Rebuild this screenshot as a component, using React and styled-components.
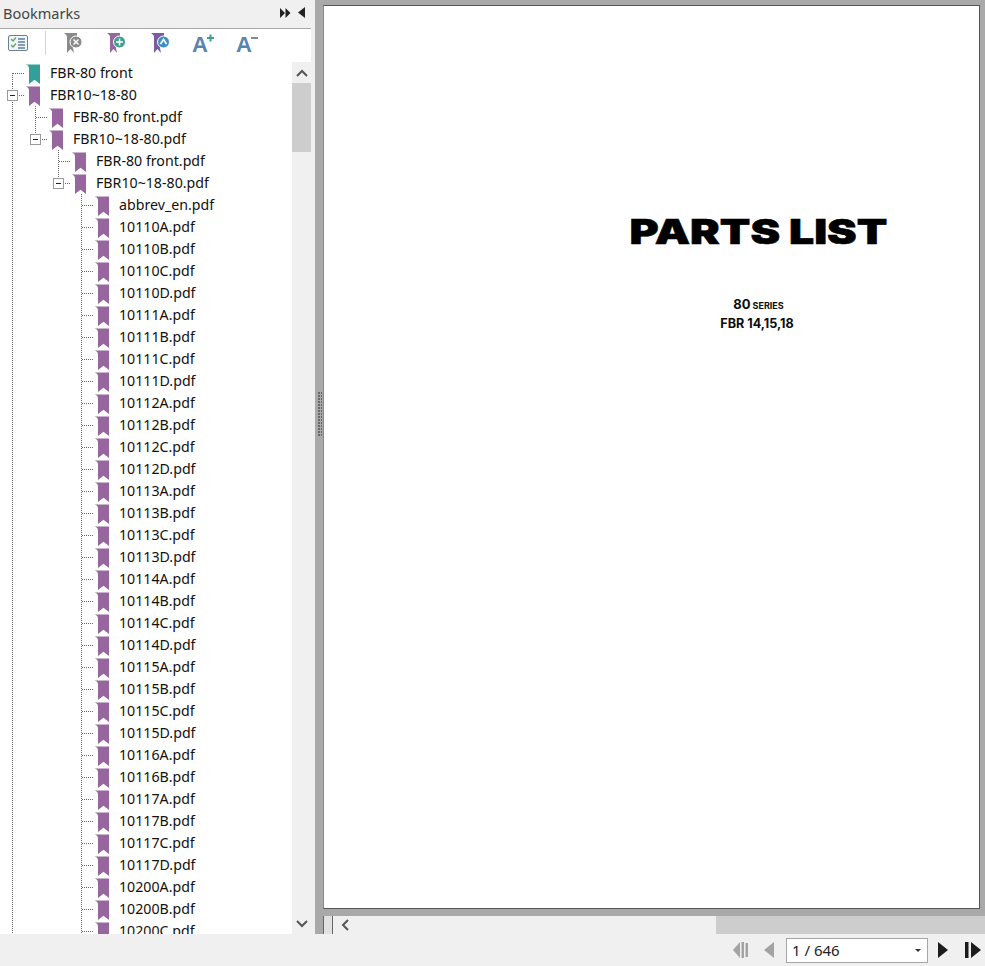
import React from "react";
import styled, { createGlobalStyle } from "styled-components";

const Global = createGlobalStyle`
  html, body { margin: 0; padding: 0; background: #f0f0f0; }
  #root { width: 985px; height: 966px; overflow: hidden; }
`;
const FONT = `"Noto Sans", "Liberation Sans", sans-serif`;

const Shell = styled.div`
  width: 985px; height: 966px; display: grid;
  grid-template-columns: 315px 670px; grid-template-rows: 934px 32px;
  font-family: ${FONT}; background: #f0f0f0;
`;
const Panel = styled.aside`display: flex; flex-direction: column; min-height: 0; padding-right: 4px;`;
const PanelHeader = styled.header`
  height: 29px; box-sizing: border-box; flex: none; display: flex; align-items: center; justify-content: space-between;
  border-bottom: 1px solid #a9a9a9; padding: 0 6px 3px 3px; color: #444; font-size: 14.5px;
`;
const HeaderTitle = styled.span`letter-spacing: 0;`;
const HeaderIcons = styled.div`display: flex; align-items: center; gap: 7px;`;
const Toolbar = styled.div`
  height: 33px; box-sizing: border-box; flex: none; background: #fff; display: flex; align-items: center; padding-bottom: 5px;
`;
const ToolIcon = styled.svg`flex: none; margin-left: ${p => p.$ml}px; display: block;`;
const Divider = styled.span`flex: none; width: 1px; height: 24px; background: #d4d4d4; margin-left: 17px;`;
const TreeArea = styled.div`flex: 1; min-height: 0; display: flex; background: #fff;`;
const Tree = styled.ul`flex: 1; margin: 0; padding: 0; list-style: none; overflow: hidden;`;
const Row = styled.li`display: flex; align-items: center; height: 22px;`;
const dotsV = `repeating-linear-gradient(to bottom, #666 0 1px, transparent 1px 2px)`;
const dotsH = `repeating-linear-gradient(to right, #666 0 1px, transparent 1px 2px)`;
const Cell = styled.span`
  flex: none; width: 23px; height: 22px; position: relative;
  &::before {
    content: ""; position: absolute; left: 12px; width: 1px;
    display: ${p => (p.$kind === "blank" ? "none" : "block")};
    top: ${p => (p.$kind === "first" ? "11px" : "0")};
    bottom: ${p => (p.$kind === "elbow" ? "11px" : "0")};
    background: ${dotsV};
  }
  &::after {
    content: ""; position: absolute; left: 13px; width: 12px; top: 11px; height: 1px;
    display: ${p => (p.$kind === "blank" || p.$kind === "through" ? "none" : "block")};
    background: ${dotsH};
  }
`;
const Expander = styled.span`
  position: absolute; z-index: 1; left: 7px; top: 6px; width: 9px; height: 9px; background: #fff;
  border: 1px solid #9a9a9a;
  &::after { content: ""; position: absolute; left: 2px; right: 2px; top: 4px; height: 1px; background: #222; }
`;
const Mark = styled.svg`flex: none; display: block; margin: 2px 10px 0 2px; color: ${p => p.$c};`;
const Label = styled.span`font-size: 14.2px; color: #111; white-space: pre; line-height: 22px;`;
const VScroll = styled.div`
  flex: none; width: 19px; background: #f0f0f0; display: flex; flex-direction: column; align-items: stretch;
`;
const ScrollBtn = styled.div`height: 21px; flex: none; display: flex; align-items: center; justify-content: center;`;
const VThumb = styled.div`height: 69px; flex: none; background: #cdcdcd;`;
const VTrack = styled.div`flex: 1;`;
const Viewer = styled.main`display: flex; flex-direction: column; min-height: 0; background: #a9a9a9;`;
const Canvas = styled.div`flex: 1; min-height: 0; padding: 5px 5px 6px 8px; position: relative;`;
const Grip = styled.span`
  position: absolute; left: 3px; top: 392px; width: 4px; height: 44px;
  background-image: radial-gradient(circle at 1px 1px, #666 0.7px, transparent 1px);
  background-size: 3px 3px;
`;
const Page = styled.section`
  height: 100%; width: 100%; box-sizing: border-box; background: #fff; border: 1px solid #555; border-left-color: #888;
  padding: 0 0 0 214px; display: flex; flex-direction: column; align-items: center;
  color: #0b0b0b; font-family: Inter, "Liberation Sans", sans-serif;
`;
const PartsTitle = styled.h1`
  margin: 208px 0 0; font-size: 34px; line-height: 36px; font-weight: 900; white-space: pre;
  -webkit-text-stroke: 0.6px #000; color: #000; transform: scaleX(1.31);
`;
const Series = styled.div`margin-top: 47px; font-weight: 700; font-size: 13px; line-height: 14px; display: flex; align-items: baseline; gap: 2px;`;
const SeriesSmall = styled.span`font-size: 9px;`;
const Model = styled.div`margin-top: 4px; font-weight: 700; font-size: 12.6px; line-height: 14px; margin-left: -3px;`;
const HScroll = styled.div`height: 18px; flex: none; margin-top: 1px; margin-left: 8px; background: #f0f0f0; display: flex; align-items: center;`;
const HBox = styled.div`width: 8px; height: 18px; flex: none; box-sizing: content-box; background: #e1e1e1; border: solid #666; border-width: 0 1px;`;
const HArrow = styled.div`width: 23px; flex: none; display: flex; justify-content: center;`;
const HGap = styled.div`flex: 1;`;
const HThumb = styled.div`width: 269px; height: 18px; background: #cdcdcd; flex: none;`;
const Footer = styled.footer`
  grid-column: 1 / 3; display: flex; align-items: center; background: #f0f0f0; padding-left: 733px;
`;
const NavIcon = styled.svg`flex: none; display: block; margin-left: ${p => p.$ml || 0}px;`;
const PageSelect = styled.div`
  flex: none; margin-left: 12px; width: 142px; height: 25px; box-sizing: border-box; border: 1px solid #a6a6a6; background: #fff;
  display: flex; align-items: center; justify-content: space-between; padding: 0 6px 0 5px; font-size: 15px; color: #222;
`;
const Caret = styled.span`width: 0; height: 0; border: 3px solid transparent; border-top: 3px solid #333; border-bottom: 0;`;

const Bookmark = ({ c }) => (
  <Mark $c={c} width="15" height="20" viewBox="0 0 15 20">
    <path fill="currentColor" d="M0.5 0.6 H15 V20 L9.5 15.8 L4 20 V4.5 C4 2.2 2.5 1.2 0.5 0.6Z" />
  </Mark>
);

const Tool = ({ ml, children, w = 22 }) => (
  <ToolIcon $ml={ml} width={w} height="22" viewBox={`0 0 ${w} 22`}>{children}</ToolIcon>
);
const LetterTool = ({ ml, children }) => (
  <ToolIcon $ml={ml} width="24" height="28" viewBox="0 0 24 28">
    <text x="0" y="23" fontFamily="Liberation Sans" fontWeight="700" fontSize="22" fill="#5a84b0">A</text>
    {children}
  </ToolIcon>
);
const Ribbon = ({ c }) => (
  <path fill={c} d="M0 1.5 L1.5 1 H13 V9 H9 V16 L10 21 L6.5 17 L3 21 V5 C3 3.4 1.5 2 0 1.5Z" />
);
const Chev = ({ d }) => (
  <svg width="12" height="8" viewBox="0 0 12 8">
    <path d={d} fill="none" stroke="#555" strokeWidth="2" />
  </svg>
);

const names = ["abbrev_en.pdf"];
for (const [n, s] of [[110, "ABCD"], [111, "ABCD"], [112, "ABCD"], [113, "ABCD"], [114, "ABCD"], [115, "ABCD"], [116, "AB"], [117, "ABCD"], [200, "ABC"]])
  for (const l of s) names.push(`10${n}${l}.pdf`);

const TEAL = "#339f99", PURPLE = "#98669f";
const rows = [
  { cells: [["first"]], label: "FBR-80 front", c: TEAL },
  { cells: [["tee", 1]], label: "FBR10~18-80" },
  { cells: [["through"], ["tee"]], label: "FBR-80 front.pdf" },
  { cells: [["through"], ["elbow", 1]], label: "FBR10~18-80.pdf" },
  { cells: [["through"], ["blank"], ["tee"]], label: "FBR-80 front.pdf" },
  { cells: [["through"], ["blank"], ["elbow", 1]], label: "FBR10~18-80.pdf" },
  ...names.map(label => ({ cells: [["through"], ["blank"], ["blank"], ["tee"]], label })),
];

export default function App() {
  return (
    <Shell>
      <Global />
      <Panel>
        <PanelHeader>
          <HeaderTitle>Bookmarks</HeaderTitle>
          <HeaderIcons>
            <svg width="11" height="10" viewBox="0 0 11 10"><path fill="#222" d="M0 0 L5 5 L0 10Z M5.5 0 L10.5 5 L5.5 10Z" /></svg>
            <svg width="7" height="11" viewBox="0 0 7 11"><path fill="#222" d="M7 0 V11 L0 5.5Z" /></svg>
          </HeaderIcons>
        </PanelHeader>
        <Toolbar>
          <ToolIcon $ml={8} width="20" height="18" viewBox="0 0 20 18">
            <rect x=".5" y="1.5" width="19" height="15" rx="1.5" fill="#f2f5f8" stroke="#6d7f92" />
            <path d="M3 5 L5 7 L8 3.5 M3 11 L5 13 L8 9.5" fill="none" stroke="#6aa35a" strokeWidth="1.3" />
            <path d="M10 5 H17 M10 8 H17 M10 11 H17 M10 14 H17" stroke="#5c7f9f" strokeWidth="1.3" />
          </ToolIcon>
          <Divider />
          <Tool ml={18}>
            <Ribbon c="#8a8a8a" />
            <circle cx="12" cy="10" r="6" fill="#8a8a8a" stroke="#fff" strokeWidth="1" />
            <path d="M9.5 7.5 L14.5 12.5 M14.5 7.5 L9.5 12.5" stroke="#fff" strokeWidth="1.5" />
          </Tool>
          <Tool ml={21}>
            <Ribbon c={PURPLE} />
            <circle cx="12.5" cy="10" r="6" fill="#3f9f8d" stroke="#fff" strokeWidth="1" />
            <path d="M12.5 6.5 V13.5 M9 10 H16" stroke="#fff" strokeWidth="1.6" />
          </Tool>
          <Tool ml={22}>
            <Ribbon c="#7a5aa0" />
            <circle cx="12.5" cy="10" r="6" fill="#3f8fc0" stroke="#fff" strokeWidth="1" />
            <path d="M9.5 12 L12.5 7.5 L15.5 12" stroke="#fff" strokeWidth="1.6" fill="none" />
          </Tool>
          <LetterTool ml={19}>
            <path d="M15 9 H22 M18.5 5.5 V12.5" stroke="#3f9f8d" strokeWidth="2" />
          </LetterTool>
          <LetterTool ml={20}>
            <path d="M15 9 H22" stroke="#7f8f8f" strokeWidth="2" />
          </LetterTool>
        </Toolbar>
        <TreeArea>
          <Tree>
            {rows.map((r, i) => (
              <Row key={i}>
                {r.cells.map(([k, box], j) => (
                  <Cell key={j} $kind={k}>{box && <Expander />}</Cell>
                ))}
                <Bookmark c={r.c || PURPLE} />
                <Label>{r.label}</Label>
              </Row>
            ))}
          </Tree>
          <VScroll>
            <ScrollBtn><Chev d="M1 7 L6 2 L11 7" /></ScrollBtn>
            <VThumb />
            <VTrack />
            <ScrollBtn><Chev d="M1 1 L6 6 L11 1" /></ScrollBtn>
          </VScroll>
        </TreeArea>
      </Panel>
      <Viewer>
        <Canvas>
          <Grip />
          <Page>
            <PartsTitle>PARTS LIST</PartsTitle>
            <Series>80<SeriesSmall>SERIES</SeriesSmall></Series>
            <Model>FBR 14,15,18</Model>
          </Page>
        </Canvas>
        <HScroll>
          <HBox />
          <HArrow><svg width="8" height="12" viewBox="0 0 8 12"><path d="M7 1 L2 6 L7 11" fill="none" stroke="#555" strokeWidth="2" /></svg></HArrow>
          <HGap />
          <HThumb />
        </HScroll>
      </Viewer>
      <Footer>
        <NavIcon width="16" height="16" viewBox="0 0 16 16"><path fill="#a3a3a3" d="M7 0 V16 L0 8Z M8.5 0 H11 V16 H8.5Z M12.5 1 H15 V15 H12.5Z" /></NavIcon>
        <NavIcon $ml={15} width="10" height="16" viewBox="0 0 10 16"><path fill="#a3a3a3" d="M10 0 V16 L0 8Z" /></NavIcon>
        <PageSelect>1 / 646<Caret /></PageSelect>
        <NavIcon $ml={10} width="10" height="16" viewBox="0 0 10 16"><path fill="#1c1c1c" d="M0 0 V16 L10 8Z" /></NavIcon>
        <NavIcon $ml={17} width="16" height="16" viewBox="0 0 16 16"><path fill="#1c1c1c" d="M0 0 H3.5 V16 H0Z M6 0 L16 8 L6 16Z" /></NavIcon>
      </Footer>
    </Shell>
  );
}
